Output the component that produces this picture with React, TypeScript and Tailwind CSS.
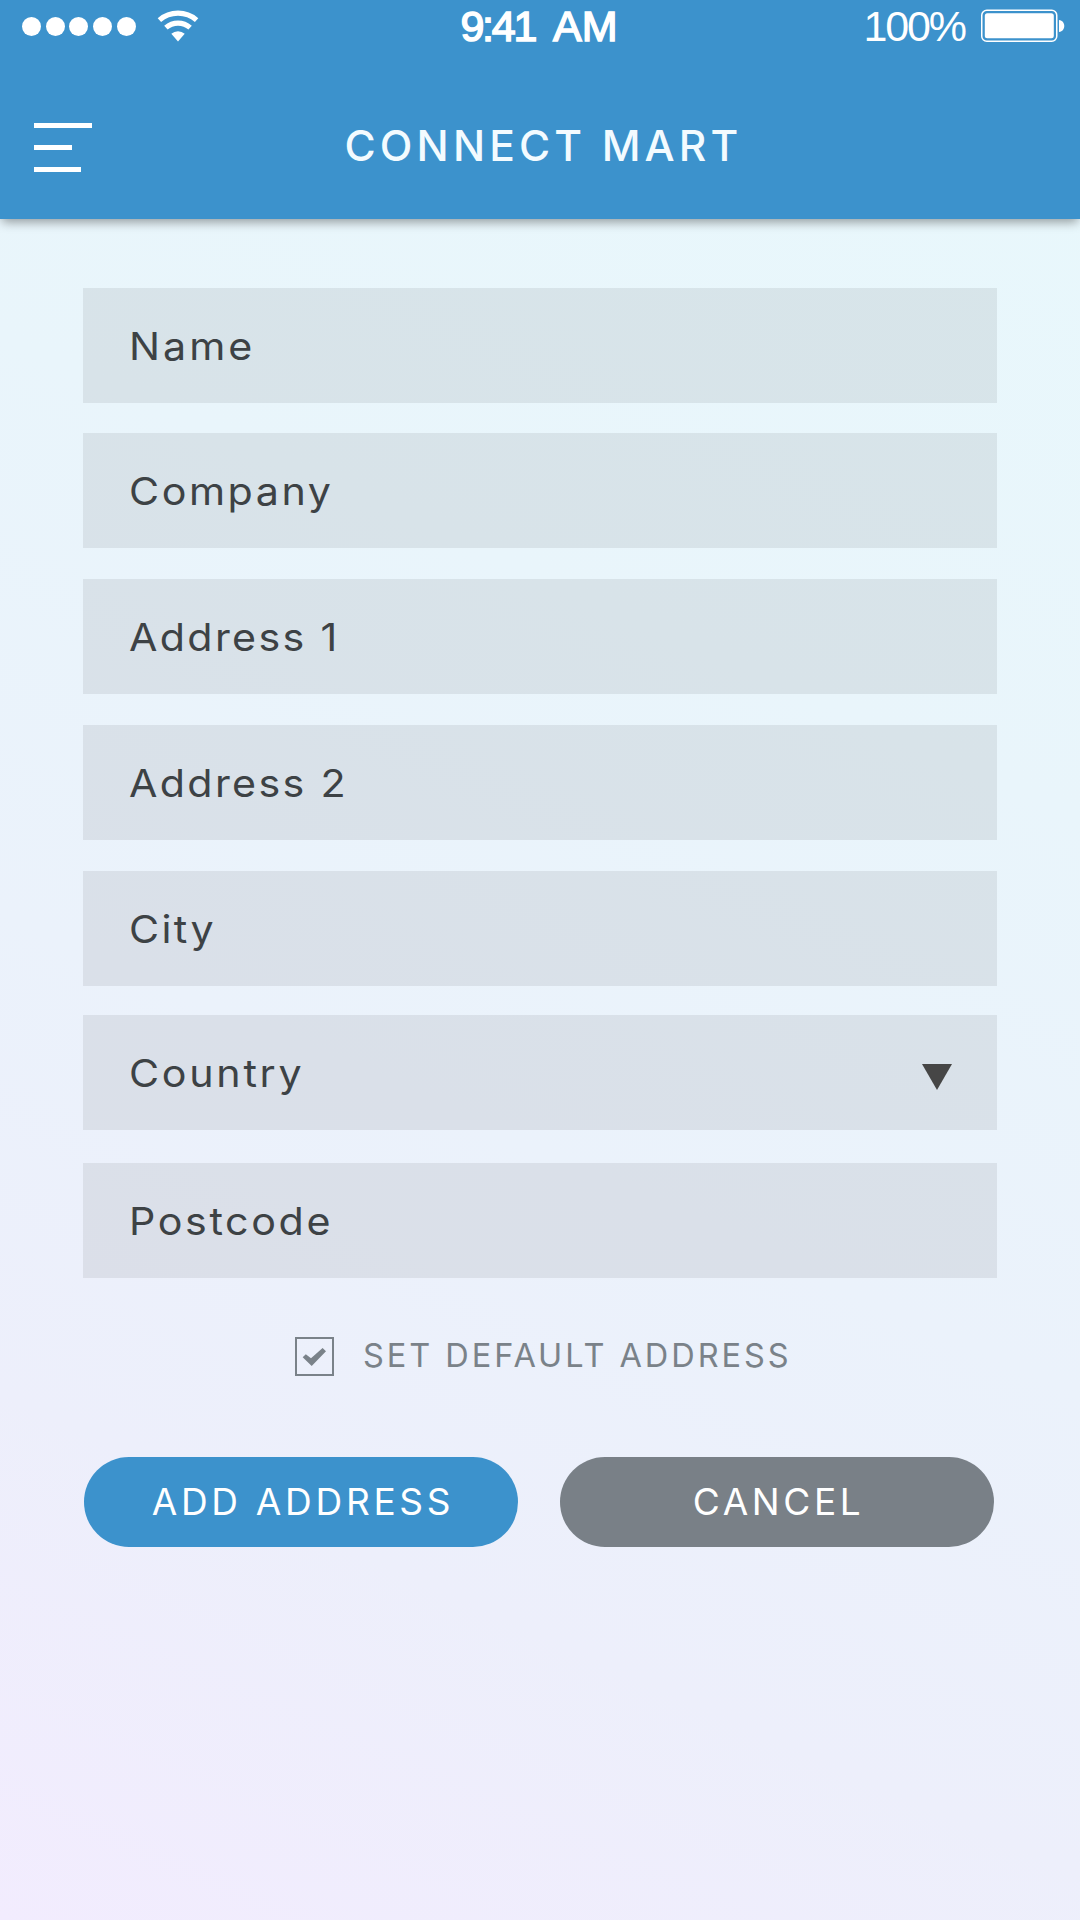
const fields = [
  { label: "Name", text: "tracking-[2.8px]", gap: "", select: false },
  { label: "Company", text: "tracking-[2.4px]", gap: "mt-[30px]", select: false },
  { label: "Address 1", text: "tracking-[2.2px]", gap: "mt-[31px]", select: false },
  { label: "Address 2", text: "tracking-[2.2px]", gap: "mt-[31px]", select: false },
  { label: "City", text: "tracking-[2.2px]", gap: "mt-[31px]", select: false },
  { label: "Country", text: "tracking-[2.55px]", gap: "mt-[29px]", select: true },
  { label: "Postcode", text: "tracking-[2.45px]", gap: "mt-[33px]", select: false },
];

function StatusBar() {
  return (
    <div className="grid h-[53px] grid-cols-[1fr_auto_1fr] items-center font-['Liberation_Sans',sans-serif] text-[43px] leading-[53px] text-white">
      <div className="flex items-center pl-[22px]">
        <div className="flex gap-[4.7px]">
          {[0, 1, 2, 3, 4].map((dot) => (
            <span key={dot} className="size-[19px] rounded-full bg-white" />
          ))}
        </div>
        <svg className="-mt-[2px] ml-[21px] h-[32px] w-[42px]" viewBox="0 0 42 32" fill="none">
          <path d="M2.4 10.1A28.4 28.4 0 0 1 39.6 10.1" stroke="white" strokeWidth="5.2" />
          <path d="M8.9 17.6A18.4 18.4 0 0 1 33.1 17.6" stroke="white" strokeWidth="5.2" />
          <path d="M21 31.5L14.3 23.8A10.2 10.2 0 0 1 27.7 23.8Z" fill="white" />
        </svg>
      </div>
      <div className="-ml-[2px] -mt-[1px] flex gap-[18px] [-webkit-text-stroke:1.5px_white]">
        <span className="tracking-[-2.3px]">9:41</span>
        <span>AM</span>
      </div>
      <div className="flex items-center justify-end pr-[15px]">
        <span className="-mt-[1px] mr-[15px] tracking-[-2.1px]">100%</span>
        <svg className="-mt-px h-[34px] w-[85px]" viewBox="0 0 85 34" fill="none">
          <rect x="1.75" y="1.25" width="75" height="31" rx="5" stroke="white" strokeWidth="1.5" />
          <rect x="4.8" y="4.3" width="69" height="25" rx="2.5" fill="white" />
          <path d="M79 11C86 11.5 86 22.5 79 23Z" fill="white" />
        </svg>
      </div>
    </div>
  );
}

export default function App() {
  return (
    <div className="h-[1920px] w-[1080px] overflow-hidden bg-[linear-gradient(204deg,#e8f8fc_0%,#e9f5fb_34%,#ebf2fb_58%,#edeffb_78%,#f2ecfe_100%)] font-[Inter,sans-serif]">
      <header className="relative h-[219px] bg-[#3c92cc] shadow-[0_5px_10px_-2px_rgba(0,0,0,0.38)]">
        <StatusBar />
        <div className="grid grid-cols-[1fr_auto_1fr] items-start pt-[63px]">
          <div className="mt-[7px] flex flex-col gap-[17px] pl-[34px]">
            <span className="h-[5px] w-[58px] bg-white" />
            <span className="h-[5px] w-[38px] bg-white" />
            <span className="h-[5px] w-[47px] bg-white" />
          </div>
          <h1 className="pl-[7px] text-[42.5px] font-medium leading-[60px] tracking-[4.15px] text-[#f3fbff]">CONNECT MART</h1>
        </div>
      </header>

      <main className="px-[83px] pt-[69px]">
        <form>
          {fields.map((field) => (
            <div key={field.label} className={`flex h-[115px] w-[914px] items-center justify-between bg-black/7 pl-[45.500px] pr-[45px] ${field.gap}`}>
              <span className={`origin-left scale-x-107 text-[38.5px] leading-[50px] text-[#3d4245] ${field.text}`}>{field.label}</span>
              {field.select && (
                <svg className="mt-[8px] h-[26px] w-[30px]" viewBox="0 0 30 26">
                  <path d="M0 0H30L15 26Z" fill="#464646" />
                </svg>
              )}
            </div>
          ))}

          <label className="mt-[59px] flex h-[39px] items-center pl-[212px] text-[#7a8289]">
            <svg className="size-[39px]" viewBox="0 0 39 39" fill="none">
              <rect x="1" y="1" width="37" height="37" stroke="currentColor" strokeWidth="2" />
              <path d="M7.7 20.3L10.8 17.2L16 21.3L27.6 11L31 14.3L16.7 29Z" fill="currentColor" />
            </svg>
            <span className="-mt-[2px] ml-[29px] text-[32.5px] leading-[39px] tracking-[2.95px]">SET DEFAULT ADDRESS</span>
          </label>

          <div className="mt-[81px] flex gap-[42px] pl-px text-[37px] text-white">
            <button type="button" className="h-[90px] w-[434px] rounded-full bg-[#3c92cc] pl-[4px] tracking-[3.7px]">ADD ADDRESS</button>
            <button type="button" className="h-[90px] w-[434px] rounded-full bg-[#798087] pl-[3px] tracking-[3.6px]">CANCEL</button>
          </div>
        </form>
      </main>
    </div>
  );
}
